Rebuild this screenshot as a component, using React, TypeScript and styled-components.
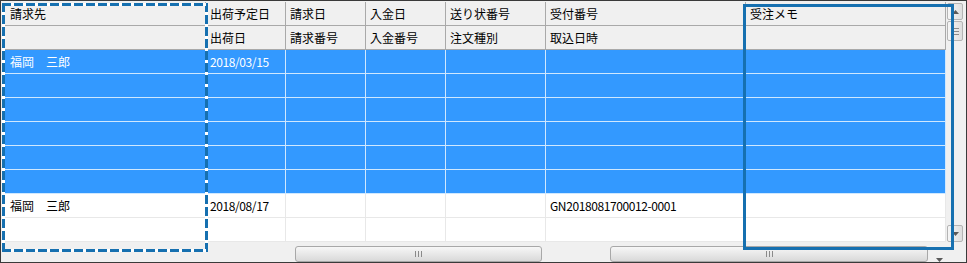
import React from "react";
import styled, { createGlobalStyle, css } from "styled-components";

const Global = createGlobalStyle`
  html, body { margin: 0; padding: 0; background: #f0f0f0; }
  * { box-sizing: border-box; }
`;

type Variant = "head" | "sel" | "plain";

const Frame = styled.div`
  position: relative;
  width: 967px;
  height: 263px;
  border: 1px solid #3a3a3a;
  padding: 1px;
  background: #f0f0f0;
  display: grid;
  grid-template-columns: 944px 1fr;
  grid-template-rows: 240px 1fr;
  font-family: "Noto Sans CJK JP", "Noto Sans", sans-serif;
  font-size: 12px;
  overflow: hidden;
`;

const Table = styled.div`
  display: grid;
  grid-template-columns: 204px 80px 80px 80px 100px 200px 200px;
  grid-auto-rows: 24px;
  background: #fff;
`;

const variantStyles = {
  head: css`
    background: #f0f0f0;
    color: #000;
    border-right: 1px solid #a9a9a9;
    border-bottom: 1px solid #a9a9a9;
  `,
  sel: css`
    background: #3399ff;
    color: #fff;
    border-right: 1px solid #cfe8ff;
    border-bottom: 1px solid #cfe8ff;
  `,
  plain: css`
    background: #fff;
    color: #000;
    border-right: 1px solid #e8e8e8;
    border-bottom: 1px solid #e8e8e8;
  `,
};

const Cell = styled.div<{ $v: Variant; $first?: boolean; $mono?: boolean }>`
  display: flex;
  align-items: center;
  padding-left: ${(p) => (p.$first ? 8 : 4)}px;
  white-space: nowrap;
  overflow: hidden;
  line-height: 1;
  ${(p) => variantStyles[p.$v]}
  ${(p) =>
    p.$mono &&
    css`
      letter-spacing: -0.4px;
    `}
`;

const VScroll = styled.div`
  display: flex;
  flex-direction: column;
  padding: 1px 1px 0 1px;
  width: 18px;
  background: #f0f0f0;
`;

const ArrowBtn = styled.div`
  width: 16px;
  height: 17px;
  border: 1px solid #b4b4b4;
  border-radius: 2px;
  background: linear-gradient(to right, #f6f6f6, #dedede);
  display: flex;
  align-items: center;
  justify-content: center;
`;

const VThumb = styled.div`
  width: 16px;
  height: 20px;
  margin-top: 1px;
  border: 1px solid #b4b4b4;
  border-radius: 2px;
  background: linear-gradient(to right, #f6f6f6, #dedede);
  display: flex;
  flex-direction: column;
  align-items: center;
  justify-content: center;
  gap: 2px;
`;

const GripH = styled.span`
  display: block;
  width: 7px;
  height: 1px;
  background: #8a8a8a;
`;

const VTrack = styled.div`
  flex: 1;
`;

const HScroll = styled.div`
  display: flex;
  align-items: center;
  padding-left: 293px;
  background: #f0f0f0;
`;

const HThumb = styled.div<{ $w: number; $gap?: number }>`
  width: ${(p) => p.$w}px;
  height: 16px;
  margin-left: ${(p) => p.$gap ?? 0}px;
  border: 1px solid #a8a8a8;
  border-radius: 3px;
  background: linear-gradient(to bottom, #f7f7f7, #d9d9d9);
  display: flex;
  align-items: center;
  justify-content: center;
  gap: 2px;
`;

const GripV = styled.span`
  display: block;
  width: 1px;
  height: 6px;
  background: #8a8a8a;
`;

const Sizer = styled.div`
  margin-left: 8px;
  margin-top: 6px;
`;

const Corner = styled.div`
  background: #f0f0f0;
`;

const dashC = "#1670b0";
const DashedBox = styled.div`
  position: absolute;
  left: 1px;
  top: 2px;
  width: 206px;
  height: 249px;
  pointer-events: none;
  background:
    repeating-linear-gradient(90deg, ${dashC} 0 9px, #ffffff 9px 12px) left top / 100% 3px no-repeat,
    repeating-linear-gradient(90deg, ${dashC} 0 9px, #ffffff 9px 12px) left bottom / 100% 3px no-repeat,
    repeating-linear-gradient(180deg, ${dashC} 0 9px, #ffffff 9px 12px) left top / 3px 100% no-repeat,
    repeating-linear-gradient(180deg, ${dashC} 0 9px, #ffffff 9px 12px) right top / 3px 100% no-repeat;
`;

const MemoBox = styled.div`
  position: absolute;
  left: 742px;
  top: 3px;
  width: 211px;
  height: 246px;
  border: 3px solid #1670b0;
  pointer-events: none;
`;

const headers1 = ["請求先", "出荷予定日", "請求日", "入金日", "送り状番号", "受付番号", "受注メモ"];
const headers2 = ["", "出荷日", "請求番号", "入金番号", "注文種別", "取込日時", ""];

const empty = ["", "", "", "", "", "", ""];
const rows: { v: Variant; cells: string[] }[] = [
  { v: "sel", cells: ["福岡\u3000三郎", "2018/03/15", "", "", "", "", ""] },
  { v: "sel", cells: empty },
  { v: "sel", cells: empty },
  { v: "sel", cells: empty },
  { v: "sel", cells: empty },
  { v: "sel", cells: empty },
  { v: "plain", cells: ["福岡\u3000三郎", "2018/08/17", "", "", "", "GN2018081700012-0001", ""] },
  { v: "plain", cells: empty },
];

const isMono = (s: string) => /^[A-Z0-9\/\-]+$/.test(s);

const Up = () => (
  <svg width="7" height="4" viewBox="0 0 7 4">
    <path d="M0 4 L3.5 0 L7 4 Z" fill="#5a5a5a" />
  </svg>
);
const Down = () => (
  <svg width="7" height="4" viewBox="0 0 7 4">
    <path d="M0 0 L3.5 4 L7 0 Z" fill="#5a5a5a" />
  </svg>
);

export default function App() {
  return (
    <>
      <Global />
      <Frame>
        <Table>
          {headers1.map((h, i) => (
            <Cell key={"h1" + i} $v="head" $first={i === 0}>
              {h}
            </Cell>
          ))}
          {headers2.map((h, i) => (
            <Cell key={"h2" + i} $v="head" $first={i === 0}>
              {h}
            </Cell>
          ))}
          {rows.map((r, ri) =>
            r.cells.map((c, ci) => (
              <Cell key={ri + "-" + ci} $v={r.v} $first={ci === 0} $mono={isMono(c) && c !== ""}>
                {c}
              </Cell>
            ))
          )}
        </Table>
        <VScroll>
          <ArrowBtn>
            <Up />
          </ArrowBtn>
          <VThumb>
            <GripH />
            <GripH />
            <GripH />
          </VThumb>
          <VTrack />
          <ArrowBtn>
            <Down />
          </ArrowBtn>
        </VScroll>
        <HScroll>
          <HThumb $w={247}>
            <GripV />
            <GripV />
            <GripV />
          </HThumb>
          <HThumb $w={318} $gap={68}>
            <GripV />
            <GripV />
            <GripV />
          </HThumb>
          <Sizer>
            <Down />
          </Sizer>
        </HScroll>
        <Corner />
        <DashedBox />
        <MemoBox />
      </Frame>
    </>
  );
}
